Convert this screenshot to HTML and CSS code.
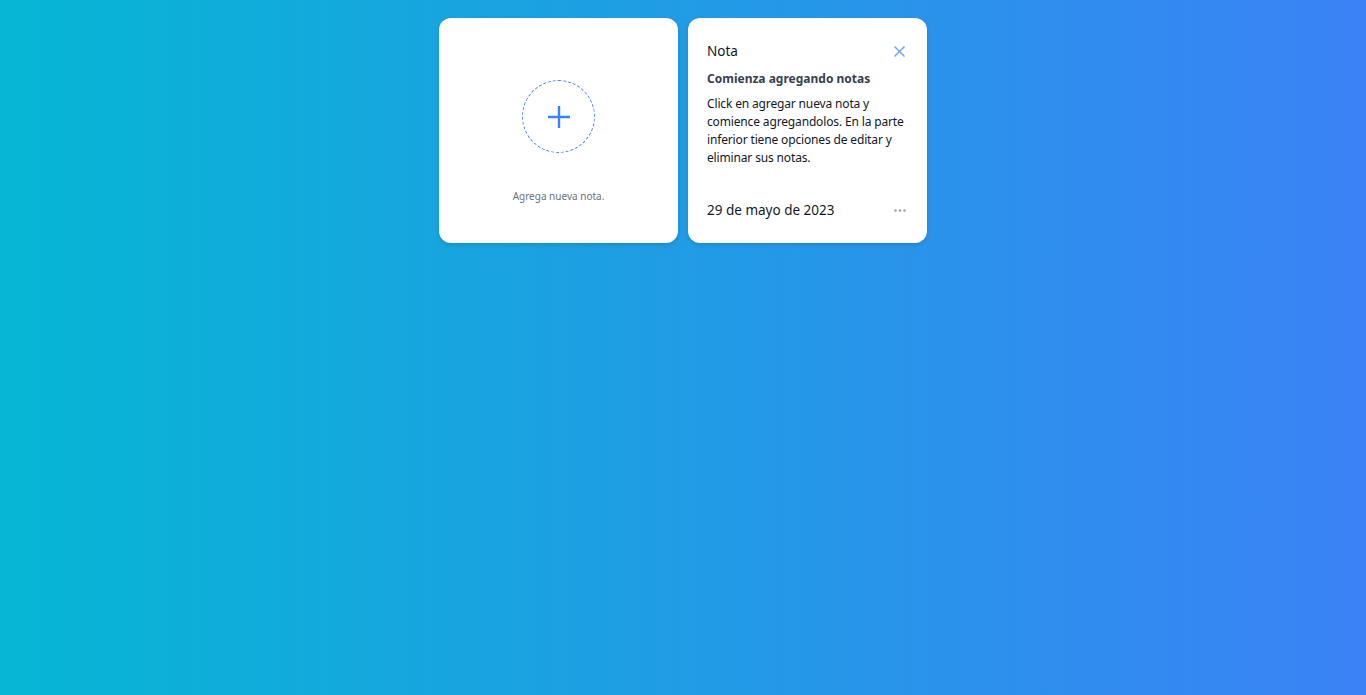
FILE: index.html
```html
<!DOCTYPE html>
<html lang="es">
<head>
<meta charset="utf-8">
<title>Notas</title>
<link rel="stylesheet" href="styles.css">
</head>
<body>
<main class="board">
  <section class="card add-card">
    <div class="add-circle">
      <svg width="22" height="22" viewBox="0 0 22 22" fill="none" stroke="#3b82f6" stroke-width="2.4" stroke-linecap="butt"><path d="M11 0v22M0 11h22"/></svg>
    </div>
    <p class="add-label">Agrega nueva nota.</p>
  </section>
  <section class="card note-card">
    <header class="note-head">
      <span class="note-kind">Nota</span>
      <svg class="close" width="11" height="11" viewBox="0 0 11 11" fill="none" stroke="#60a5fa" stroke-width="1.4"><path d="M0.5 0.5l10 10M10.5 0.5l-10 10"/></svg>
    </header>
    <h2 class="note-title">Comienza agregando notas</h2>
    <p class="note-body">Click en agregar nueva nota y comience agregandolos. En la parte inferior tiene opciones de editar y eliminar sus notas.</p>
    <footer class="note-foot">
      <span class="note-date">29 de mayo de 2023</span>
      <svg width="12" height="3" viewBox="0 0 12 3" fill="#9ca3af"><circle cx="1.5" cy="1.5" r="1.3"/><circle cx="6" cy="1.5" r="1.3"/><circle cx="10.5" cy="1.5" r="1.3"/></svg>
    </footer>
  </section>
</main>
</body>
</html>
```
FILE: styles.css
```css
* { box-sizing: border-box; }
html, body { height: 100%; }
body {
  margin: 0;
  background: linear-gradient(to right, #06b6d4, #3b82f6);
  font-family: "Noto Sans", "Open Sans", sans-serif;
  color: #111827;
}
.board {
  display: flex;
  justify-content: center;
  gap: 10px;
  padding-top: 18px;
}
.card {
  width: 239px;
  height: 225px;
  background: #fff;
  border-radius: 12px;
  box-shadow: 0 2px 4px rgba(0,0,0,0.12);
}
.add-card {
  display: flex;
  flex-direction: column;
  align-items: center;
  padding-top: 62px;
}
.add-circle {
  width: 73px;
  height: 73px;
  border: 1px dashed #3b82f6;
  border-radius: 50%;
  display: flex;
  align-items: center;
  justify-content: center;
}
.add-label {
  margin: 36px 0 0;
  font-size: 10px;
  color: #6b7280;
}
.note-card {
  display: flex;
  flex-direction: column;
  padding: 24px 16px 24px 19px;
}
.note-head {
  display: flex;
  justify-content: space-between;
  align-items: center;
  height: 18px;
  padding-right: 6px;
}
.note-kind { font-size: 13.5px; color: #111827; }
.note-title {
  margin: 10px 0 0;
  font-size: 12px;
  font-weight: 700;
  color: #374151;
  line-height: 18px;
}
.note-body {
  margin: 7px 0 0;
  font-size: 12px;
  line-height: 18px;
  letter-spacing: -0.15px;
  color: #111827;
}
.note-foot {
  margin-top: auto;
  display: flex;
  justify-content: space-between;
  align-items: center;
  padding-right: 5px;
}
.note-date { font-size: 13.5px; color: #111827; }
```
